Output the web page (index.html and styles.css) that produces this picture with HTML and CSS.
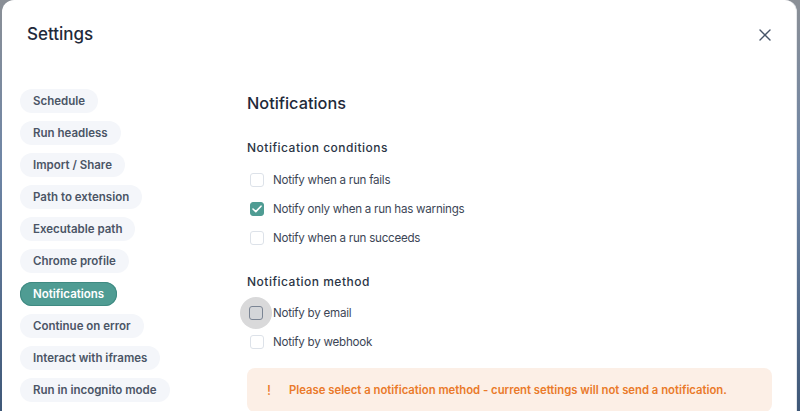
FILE: index.html
```html
<!DOCTYPE html>
<html>
<head>
<meta charset="utf-8">
<link rel="stylesheet" href="styles.css">
</head>
<body>
<div class="modal">
  <header class="header">
    <h1 class="title">Settings</h1>
    <button class="close" aria-label="Close">
      <svg width="12" height="12" viewBox="0 0 12 12"><path d="M1 1L11 11M11 1L1 11" stroke="#475569" stroke-width="1.4" stroke-linecap="round"/></svg>
    </button>
  </header>
  <div class="main">
    <nav class="nav">
      <span class="pill">Schedule</span>
      <span class="pill">Run headless</span>
      <span class="pill">Import / Share</span>
      <span class="pill">Path to extension</span>
      <span class="pill">Executable path</span>
      <span class="pill">Chrome profile</span>
      <span class="pill active">Notifications</span>
      <span class="pill">Continue on error</span>
      <span class="pill">Interact with iframes</span>
      <span class="pill">Run in incognito mode</span>
    </nav>
    <section class="content">
      <h2 class="heading">Notifications</h2>
      <h3 class="sub">Notification conditions</h3>
      <div class="rows">
        <label class="row"><span class="box"></span>Notify when a run fails</label>
        <label class="row"><span class="box checked"><svg width="10" height="8" viewBox="0 0 10 8"><path d="M1 4L3.8 6.6L9 1.2" fill="none" stroke="#fff" stroke-width="1.6" stroke-linecap="round" stroke-linejoin="round"/></svg></span>Notify only when a run has warnings</label>
        <label class="row"><span class="box"></span>Notify when a run succeeds</label>
      </div>
      <h3 class="sub sub2">Notification method</h3>
      <div class="rows rows2">
        <label class="row"><span class="halo"><span class="box focus"></span></span>Notify by email</label>
        <label class="row"><span class="box"></span>Notify by webhook</label>
      </div>
      <div class="alert"><span class="bang">!</span>Please select a notification method - current settings will not send a notification.</div>
    </section>
  </div>
</div>
</body>
</html>
```
FILE: styles.css
```css
* { box-sizing: border-box; }
html, body { margin: 0; height: 100%; overflow: hidden; }
body {
  background: linear-gradient(180deg, #8a8f96 0%, #6f86a6 40%, #3f5878 100%);
  font-family: Inter, "Noto Sans", sans-serif;
}
.modal {
  margin-left: 2px;
  width: 795px;
  height: 430px;
  background: #fff;
  border-radius: 12px 12px 0 0;
  border-right: 1px solid #e6e8eb;
}
.header {
  display: flex;
  align-items: center;
  justify-content: space-between;
  height: 87px;
  padding: 0 24px 19px 25px;
}
.title {
  margin: 0;
  font-size: 17px;
  font-weight: 500;
  color: #1f2a3a;
  line-height: 24px;
}
.close {
  border: 0;
  background: none;
  padding: 0;
  width: 14px;
  height: 14px;
  display: flex;
  align-items: center;
  justify-content: center;
  margin-top: 1px;
}
.main {
  display: flex;
  padding-top: 2px;
}
.nav {
  flex: 0 0 245px;
  padding-left: 18px;
  display: flex;
  flex-direction: column;
  align-items: flex-start;
  gap: 8.1px;
}
.pill {
  height: 24px;
  line-height: 24px;
  padding: 0 13px;
  border-radius: 12px;
  background: #f4f6fa;
  color: #4b5566;
  font-size: 11.5px;
  font-weight: 600;
  white-space: nowrap;
}
.pill.active {
  background: #4f9c93;
  color: #fff;
  box-shadow: inset 0 0 0 1px #3f8a82;
}
.content {
  flex: 1;
  min-width: 0;
  padding-top: 2px;
  padding-right: 24px;
}
.heading {
  margin: 0;
  font-size: 16.3px;
  font-weight: 500;
  line-height: 24px;
  color: #1f2a3a;
}
.sub {
  margin: 25px 0 0;
  font-size: 12px;
  font-weight: 500;
  letter-spacing: 0.5px;
  line-height: 16px;
  color: #2b3545;
}
.sub2 { margin-top: 26px; }
.rows {
  margin-top: 14px;
  display: flex;
  flex-direction: column;
  gap: 9px;
}
.rows2 { margin-top: 13px; }
.row {
  display: flex;
  align-items: center;
  height: 20px;
  font-size: 11.6px;
  letter-spacing: -0.25px;
  color: #3c4656;
}
.box {
  width: 14px;
  height: 14px;
  margin: 0 9px 0 3px;
  border: 1px solid #dde2e9;
  border-radius: 3px;
  background: #fff;
  display: flex;
  align-items: center;
  justify-content: center;
  flex: none;
}
.box.checked {
  background: #4f9c93;
  border-color: #4f9c93;
}
.halo {
  flex: none;
  width: 32px;
  height: 32px;
  margin: -6px 1px -6px -7px;
  border-radius: 50%;
  background: #d9d9da;
  display: flex;
  align-items: center;
  justify-content: center;
}
.box.focus {
  margin: 0;
  border: 1.5px solid #7b8594;
  background: #d4d6d9;
}
.alert {
  margin-top: 16px;
  background: #fcefe6;
  border-radius: 8px;
  padding: 14px 0 14px 20px;
  color: #ea7a2a;
  font-size: 11.3px;
  font-weight: 600;
  line-height: 16px;
  display: flex;
  white-space: nowrap;
}
.bang {
  width: 22px;
  font-size: 13px;
  font-weight: 500;
}
```
